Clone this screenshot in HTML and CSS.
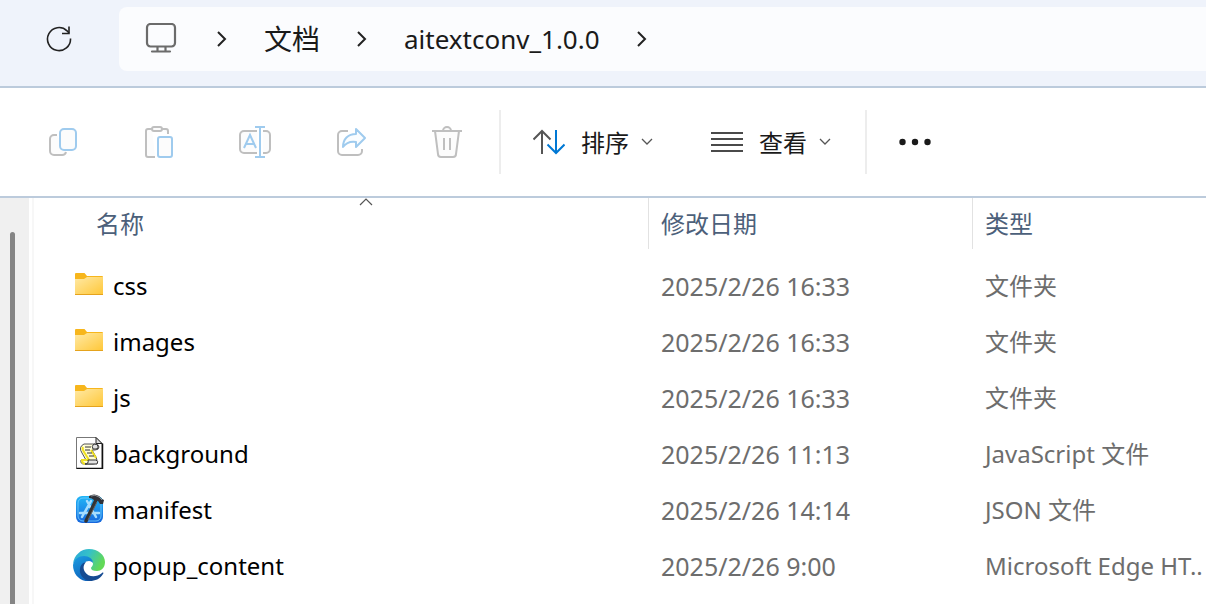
FILE: index.html
```html
<!DOCTYPE html>
<html lang="zh-CN">
<head>
    <meta charset="UTF-8">
    <title>aitextconv_1.0.0</title>
    <link rel="stylesheet" href="styles.css">
</head>
<body>
    <svg class="defs" width="0" height="0" aria-hidden="true">
        <defs>
            <linearGradient id="folderFill" x1="0" y1="0" x2="1" y2="1">
                <stop offset="0" stop-color="#ffe9a5"/>
                <stop offset="1" stop-color="#ffc83a"/>
            </linearGradient>
            <linearGradient id="xcodeFill" x1="0" y1="0" x2="0" y2="1">
                <stop offset="0" stop-color="#21b6f7"/>
                <stop offset="1" stop-color="#1766dc"/>
            </linearGradient>
            <linearGradient id="edgeTop" x1="0" y1="0" x2="1" y2="0.4">
                <stop offset="0" stop-color="#2aa5dc"/>
                <stop offset="0.5" stop-color="#35c1c8"/>
                <stop offset="1" stop-color="#62d957"/>
            </linearGradient>
            <linearGradient id="edgeLeft" x1="0" y1="0" x2="0.4" y2="1">
                <stop offset="0" stop-color="#1b9de2"/>
                <stop offset="1" stop-color="#0f65bd"/>
            </linearGradient>
        </defs>
        <symbol id="folder" viewBox="0 0 32 32">
            <path d="M2 5q0-1 1-1h8.500l2.500 3h15q1 0 1 1v17q0 1-1 1H3q-1 0-1-1z" fill="#f7b61c"/>
            <path d="M2 10h9l3-2h16v17H2z" fill="url(#folderFill)"/>
            <path d="M2 25.500h28" stroke="#e5a31d"/>
        </symbol>
        <symbol id="chevron-right" viewBox="0 0 12 18">
            <path d="M2 2l7 7-7 7" fill="none" stroke="#222" stroke-width="2"/>
        </symbol>
        <symbol id="chevron-down" viewBox="0 0 12 8">
            <path d="M1 1l5 5 5-5" fill="none" stroke="#555" stroke-width="1.300"/>
        </symbol>
    </svg>

    <header class="address-bar">
        <button class="refresh" aria-label="刷新">
            <svg width="28" height="28" viewBox="0 0 28 28" fill="none" stroke="#222" stroke-width="1.600">
                <path d="M24.500 13.500A11.500 11.500 0 1 1 21 5.800L23 8"/>
                <path d="M23 1.500V8.500H16"/>
            </svg>
        </button>
        <nav class="breadcrumb" aria-label="路径">
            <a href="#" class="crumb crumb-root" aria-label="此电脑">
                <svg width="32" height="32" viewBox="0 0 32 32" fill="none" stroke="#6b6b6b" stroke-width="2.200" stroke-linecap="round">
                    <rect x="2" y="1" width="28" height="22.500" rx="3.500"/>
                    <path d="M12.500 24v4M20.500 24v4M7 28.500h18"/>
                </svg>
            </a>
            <svg class="sep" width="12" height="18"><use href="#chevron-right"/></svg>
            <a href="#" class="crumb">文档</a>
            <svg class="sep" width="12" height="18"><use href="#chevron-right"/></svg>
            <a href="#" class="crumb crumb-latin">aitextconv_1.0.0</a>
            <svg class="sep" width="12" height="18"><use href="#chevron-right"/></svg>
        </nav>
    </header>

    <div class="toolbar">
        <div class="actions">
            <button class="action" aria-label="复制" disabled>
                <svg width="32" height="32" viewBox="0 0 32 32" fill="#fcfcfc" stroke-width="2">
                    <path d="M10 9H7a4 4 0 0 0-4 4v12a4 4 0 0 0 4 4h8a4 4 0 0 0 4-3" stroke="#bfbfbf"/>
                    <rect x="13" y="3" width="16" height="21" rx="4" stroke="#9fcbee"/>
                </svg>
            </button>
            <button class="action" aria-label="粘贴" disabled>
                <svg width="32" height="32" viewBox="0 0 32 32" fill="#fcfcfc" stroke-width="2">
                    <path d="M9 3H5a2 2 0 0 0-2 2v24a2 2 0 0 0 2 2h7M19 3h4a2 2 0 0 1 2 2v3" stroke="#bfbfbf"/>
                    <rect x="9" y="1" width="10" height="4" rx="2" stroke="#bfbfbf"/>
                    <rect x="15" y="11" width="14" height="20" rx="2" stroke="#9fcbee"/>
                </svg>
            </button>
            <button class="action" aria-label="重命名" disabled>
                <svg width="32" height="32" viewBox="0 0 32 32" fill="#fcfcfc" stroke-width="2">
                    <path d="M18 5H5a4 4 0 0 0-4 4v14a4 4 0 0 0 4 4h13M24 5h3a4 4 0 0 1 4 4v14a4 4 0 0 1-4 4h-3" stroke="#bfbfbf"/>
                    <path d="M5 22l6-13 6 13M7 18h8M16 1h10M16 31h10M21 1v30" fill="none" stroke="#9fcbee"/>
                </svg>
            </button>
            <button class="action" aria-label="共享" disabled>
                <svg width="32" height="32" viewBox="0 0 32 32" fill="none" stroke-width="2" stroke-linejoin="round">
                    <path d="M13 5H7a4 4 0 0 0-4 4v16a4 4 0 0 0 4 4h16a4 4 0 0 0 4-4v-2" stroke="#bfbfbf"/>
                    <path d="M21 3l9 9-9 9v-5c-6-1-10 1-13 5 0-8 5-13 13-13z" fill="#fafdff" stroke="#9fcbee"/>
                </svg>
            </button>
            <button class="action" aria-label="删除" disabled>
                <svg width="32" height="32" viewBox="0 0 32 32" fill="#fcfcfc" stroke="#bfbfbf" stroke-width="2">
                    <path d="M4 5l3 23q0 3 3 3h12q3 0 3-3l3-23"/>
                    <path d="M1 5h30M12 5a4 4 0 0 1 8 0M13 12v12M19 12v12"/>
                </svg>
            </button>
        </div>
        <div class="menus">
            <button class="menu">
                <svg width="32" height="32" viewBox="0 0 32 32" fill="none" stroke-width="2">
                    <path d="M9 28V5M0.500 13.500L9 5l8.500 8.500" stroke="#555"/>
                    <path d="M23 4v23M14.500 18.500L23 27l8.500-8.500" stroke="#0078d4"/>
                </svg>
                <span class="label">排序</span>
                <svg class="caret" width="12" height="8"><use href="#chevron-down"/></svg>
            </button>
            <button class="menu">
                <svg width="32" height="32" viewBox="0 0 32 32" stroke="#4a4a4a" stroke-width="2">
                    <path d="M0 7h32M0 13h32M0 19h32M0 25h32"/>
                </svg>
                <span class="label">查看</span>
                <svg class="caret" width="12" height="8"><use href="#chevron-down"/></svg>
            </button>
        </div>
        <button class="more" aria-label="更多">
            <svg width="32" height="32" viewBox="0 0 32 32" fill="#1a1a1a">
                <circle cx="3.500" cy="16" r="3.200"/>
                <circle cx="16" cy="16" r="3.200"/>
                <circle cx="28.500" cy="16" r="3.200"/>
            </svg>
        </button>
    </div>

    <main class="content">
        <div class="side"><div class="thumb"></div></div>
        <div class="files">
            <table>
                <colgroup>
                    <col class="col-name">
                    <col class="col-date">
                    <col>
                </colgroup>
                <thead>
                    <tr>
                        <th>
                            <div class="head">名称</div>
                            <svg class="sorted" width="14" height="8" viewBox="0 0 14 8" fill="none" stroke="#555" stroke-width="1.200"><path d="M1 7l6-6 6 6"/></svg>
                        </th>
                        <th><div class="head">修改日期</div></th>
                        <th><div class="head">类型</div></th>
                    </tr>
                </thead>
                <tbody>
                    <tr>
                        <td><div class="file"><svg width="32" height="32"><use href="#folder"/></svg>css</div></td>
                        <td class="date">2025/2/26 16:33</td>
                        <td>文件夹</td>
                    </tr>
                    <tr>
                        <td><div class="file"><svg width="32" height="32"><use href="#folder"/></svg>images</div></td>
                        <td class="date">2025/2/26 16:33</td>
                        <td>文件夹</td>
                    </tr>
                    <tr>
                        <td><div class="file"><svg width="32" height="32"><use href="#folder"/></svg>js</div></td>
                        <td class="date">2025/2/26 16:33</td>
                        <td>文件夹</td>
                    </tr>
                    <tr>
                        <td><div class="file">
                            <!-- script scroll -->
                            <svg width="32" height="32" viewBox="0 0 32 32">
                                <path d="M3.500 .5H23l6 6V31.500H3.500z" fill="#fff" stroke="#777"/>
                                <path d="M23 .5v6h6z" fill="#ddd" stroke="#222"/>
                                <path d="M29.500 6.500V31.500H3.500" fill="none" stroke="#111" stroke-width="1.500"/>
                                <path d="M11 7h11q4 0 4 3t-4 3h-3l4 7q3 7-3 7H11q-4 0-3-4h5l-4-7q-4-6 2-9z" fill="#fffdd8" stroke="#555"/>
                                <path d="M10 10q-1 2 1 5l5 8H9q0 3 3 4M18 13l5 8" fill="none" stroke="#efe020" stroke-width="2"/>
                                <path d="M12 10h6M12 13h5M14 16h5M16 19h5" stroke="#333"/>
                                <path d="M21 7q-3 2-1 5h3q3 0 2-3-1-2-4-2zM15 23h8q3 1 1 4H12q4 0 3-4z" fill="#e3e3e3" stroke="#333"/>
                            </svg>background</div></td>
                        <td class="date">2025/2/26 11:13</td>
                        <td>JavaScript 文件</td>
                    </tr>
                    <tr>
                        <td><div class="file">
                            <svg width="32" height="32" viewBox="0 0 32 32">
                                <rect x="3" y="3" width="27" height="27" rx="6" fill="url(#xcodeFill)"/>
                                <rect x="5" y="5" width="23" height="23" rx="5" fill="none" stroke="#77d2ff" stroke-width=".8"/>
                                <path d="M14 8l9 16M18 8L9 24M7 20h19" fill="none" stroke="#a6ddff" stroke-width="2.500" stroke-linecap="round"/>
                                <path d="M23 7L13 28" stroke="#333" stroke-width="3.500" stroke-linecap="round"/>
                                <path d="M24 9L15 27" stroke="#686868" stroke-width="1"/>
                                <path d="M16 3q5-3 10 0l3 3 2 1-1 4-3 0-2-3-4-1q-2-2-5-2z" fill="#303238"/>
                                <path d="M18 3q4-2 8 1l3 3" fill="none" stroke="#8b8f94"/>
                            </svg>manifest</div></td>
                        <td class="date">2025/2/26 14:14</td>
                        <td>JSON 文件</td>
                    </tr>
                    <tr>
                        <td><div class="file">
                            <svg width="32" height="32" viewBox="0 0 32 32">
                                <path d="M0 15C1 6 8 0 16 0c9 0 16 6 16 13 0 6-4 9-8 9-4 0-6-1-6-3 0-1 2-2 2-4 0-4-4-7-9-7C6 8 2 11 0 15z" fill="url(#edgeTop)"/>
                                <path d="M0 16C1 10 6 7 11 7c5 0 9 3 9 7-1-1-2-2-4-2-5 0-7 5-6 9 1 6 5 10 9 11-11 2-19-6-19-16z" fill="url(#edgeLeft)"/>
                                <path d="M13 13c-3 3-3 7-1 10 3 5 11 6 17 1 1-1 2 0 1 1-3 5-8 7-13 7-7-1-11-7-10-12 0-3 2-6 6-7z" fill="#154b92"/>
                            </svg>popup_content</div></td>
                        <td class="date">2025/2/26 9:00</td>
                        <td>Microsoft Edge HT..</td>
                    </tr>
                </tbody>
            </table>
        </div>
    </main>
</body>
</html>
```

FILE: styles.css
```css
* {
    box-sizing: border-box;
}
body {
    margin: 0;
    height: 100vh;
    display: flex;
    flex-direction: column;
    overflow: hidden;
    background-color: #fff;
    color: #1a1a1a;
    font-family: "Noto Sans", "Noto Sans CJK SC", sans-serif;
    font-size: 24px;
    line-height: 32px;
}
svg {
    display: block;
    flex: none;
}
.defs {
    position: absolute;
}
button {
    display: flex;
    align-items: center;
    justify-content: center;
    padding: 0;
    border: none;
    background: none;
    color: inherit;
    font: inherit;
    cursor: pointer;
}
.address-bar {
    display: flex;
    flex: none;
    padding: 7px 0 15px;
    background-color: #eff3fb;
    border-bottom: 2px solid #bccbdc;
}
.refresh {
    flex: none;
    width: 119px;
}
.breadcrumb {
    flex: 1;
    display: flex;
    align-items: center;
    height: 64px;
    padding-left: 26px;
    background-color: #fbfcfe;
    border-radius: 8px 0 0 8px;
    font-size: 28px;
    white-space: nowrap;
}
.crumb {
    color: inherit;
    text-decoration: none;
}
.crumb-root {
    margin-right: 3px;
}
.crumb-latin {
    font-size: 26px;
}
.sep {
    margin: 0 36px;
}
.toolbar {
    display: flex;
    flex: none;
    align-items: center;
    height: 110px;
    padding-left: 15px;
    border-bottom: 2px solid #bccbdc;
}
.actions {
    display: flex;
    padding-right: 4px;
}
.action {
    width: 96px;
    height: 64px;
}
.menus {
    display: flex;
    gap: 58px;
    height: 64px;
    padding: 0 34px 0 32px;
    border-left: 2px solid #ededed;
    border-right: 2px solid #ededed;
}
.menu {
    gap: 16px;
}
.label {
    padding-top: 2px;
}
.caret {
    margin-left: -4px;
}
.more {
    width: 96px;
    height: 64px;
}
.content {
    flex: 1;
    display: flex;
    min-height: 0;
}
.side {
    flex: none;
    width: 29px;
    padding: 34px 0 0 10px;
    background-color: #f0f0f0;
}
.thumb {
    width: 5px;
    height: 100%;
    border-radius: 3px 3px 0 0;
    background-color: #858585;
}
.files {
    flex: 1;
    min-width: 0;
    margin-left: 3px;
    border-left: 2px solid #f7f7f7;
    overflow: hidden;
}
table {
    width: 100%;
    table-layout: fixed;
    border-collapse: collapse;
}
.col-name {
    width: 614px;
}
.col-date {
    width: 324px;
}
th {
    position: relative;
    padding: 0 0 9px;
    color: #4c607a;
    font-weight: normal;
    text-align: left;
}
.head {
    height: 51px;
    padding: 10px 12px;
    border-left: 1px solid #e2e2e2;
}
th:first-child .head {
    padding-left: 62px;
    border-left: none;
}
.sorted {
    position: absolute;
    top: 0;
    left: 325px;
}
td {
    height: 56px;
    padding: 0 0 0 13px;
    color: #6d6d6d;
    white-space: nowrap;
}
td:first-child {
    padding-left: 39px;
    color: #000;
}
.date {
    font-size: 25px;
}
.file {
    display: flex;
    align-items: center;
    gap: 8px;
}
.file svg {
    margin-bottom: 2px;
}
```
